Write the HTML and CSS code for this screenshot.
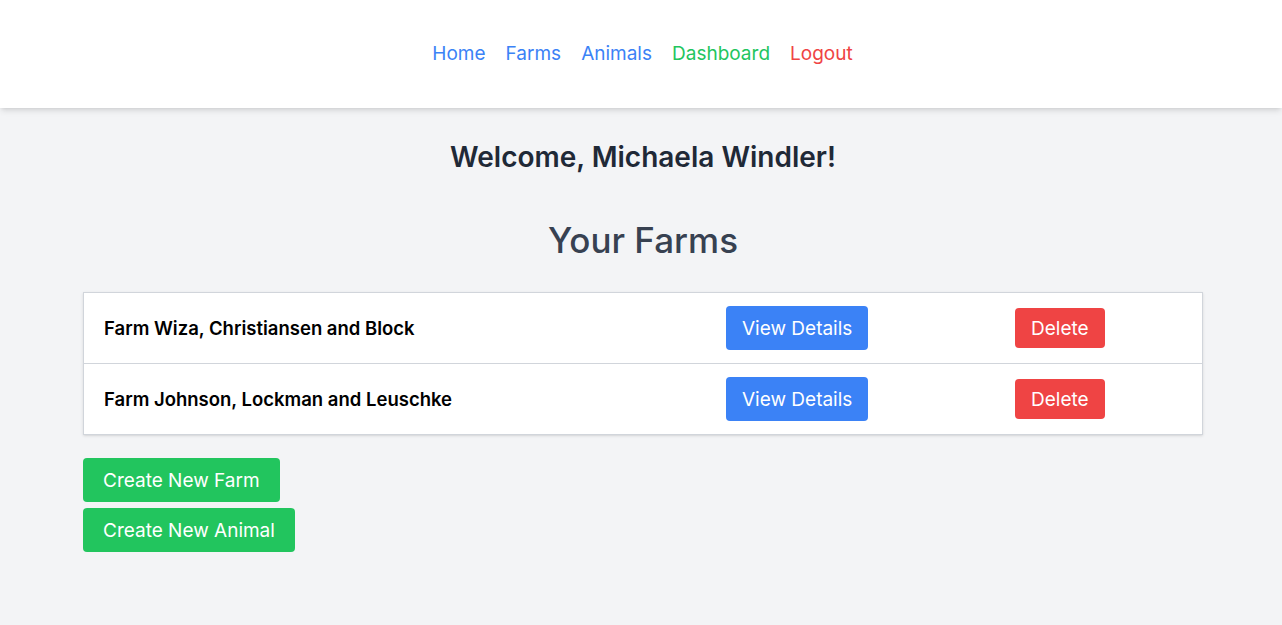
FILE: index.html
```html
<!DOCTYPE html>
<html lang="en">
<head>
<meta charset="utf-8">
<title>Dashboard</title>
<link rel="stylesheet" href="styles.css">
</head>
<body>
<header class="topbar">
  <nav class="nav">
    <a class="nav-link blue" href="#">Home</a>
    <a class="nav-link blue" href="#">Farms</a>
    <a class="nav-link blue" href="#">Animals</a>
    <a class="nav-link green" href="#">Dashboard</a>
    <a class="nav-link red" href="#">Logout</a>
  </nav>
</header>
<main class="main">
  <h2 class="welcome">Welcome, Michaela Windler!</h2>
  <h1 class="title">Your Farms</h1>
  <div class="farms">
    <div class="farm-row">
      <div class="farm-name">Farm Wiza, Christiansen and Block</div>
      <div class="farm-cell"><a class="btn btn-blue" href="#">View Details</a></div>
      <div class="farm-cell"><button class="btn btn-red btn-small">Delete</button></div>
    </div>
    <div class="farm-row">
      <div class="farm-name">Farm Johnson, Lockman and Leuschke</div>
      <div class="farm-cell"><a class="btn btn-blue" href="#">View Details</a></div>
      <div class="farm-cell"><button class="btn btn-red btn-small">Delete</button></div>
    </div>
  </div>
  <div class="actions">
    <a class="btn btn-green" href="#">Create New Farm</a>
    <a class="btn btn-green" href="#">Create New Animal</a>
  </div>
</main>
</body>
</html>
```
FILE: styles.css
```css
* { box-sizing: border-box; }
html, body { margin: 0; padding: 0; }
body {
  background: #f3f4f6;
  font-family: "Inter", "Noto Sans", sans-serif;
  color: #111827;
  min-height: 625px;
}
.topbar {
  background: #fff;
  height: 108px;
  box-shadow: 0 4px 6px -1px rgba(0,0,0,0.1), 0 2px 4px -2px rgba(0,0,0,0.1);
  display: flex;
  align-items: center;
  justify-content: center;
  padding-left: 3px;
  position: relative;
}
.nav {
  display: flex;
  gap: 20px;
  font-size: 19px;
  line-height: 28px;
}
.nav-link { text-decoration: none; }
.blue { color: #3b82f6; }
.green { color: #22c55e; }
.red { color: #ef4444; }
.main {
  width: 1124px;
  margin: 0 auto;
  padding: 33px 0 0 4px;
}
.welcome {
  margin: 0;
  text-align: center;
  font-size: 28px;
  line-height: 32px;
  font-weight: 600;
  color: #1f2937;
}
.title {
  margin: 47px 0 32px;
  text-align: center;
  font-size: 35px;
  line-height: 40px;
  font-weight: 500;
  color: #374151;
}
.farms {
  background: #fff;
  border: 1px solid #d1d5db;
  box-shadow: 0 1px 3px 0 rgba(0,0,0,0.1), 0 1px 2px -1px rgba(0,0,0,0.1);
}
.farm-row {
  display: grid;
  grid-template-columns: 622px 289px 1fr;
  height: 70px;
  align-items: center;
  box-sizing: content-box;
}
.farm-row + .farm-row { border-top: 1px solid #d1d5db; }
.farm-name {
  padding-left: 20px;
  font-size: 18.5px;
  font-weight: 600;
  color: #000;
}
.farm-cell { padding-left: 20px; display: flex; }
.btn {
  display: inline-flex;
  align-items: center;
  height: 44px;
  padding: 0 16px;
  border: 0;
  border-radius: 4px;
  font-family: inherit;
  font-size: 19px;
  color: #fff;
  text-decoration: none;
  cursor: pointer;
}
.btn-small { height: 40px; padding: 0 16px; }
.btn-blue { background: #3b82f6; }
.btn-red { background: #ef4444; }
.btn-green { background: #22c55e; padding: 0 20px; }
.actions {
  margin-top: 23px;
  display: flex;
  flex-direction: column;
  align-items: flex-start;
  gap: 6px;
}
```
